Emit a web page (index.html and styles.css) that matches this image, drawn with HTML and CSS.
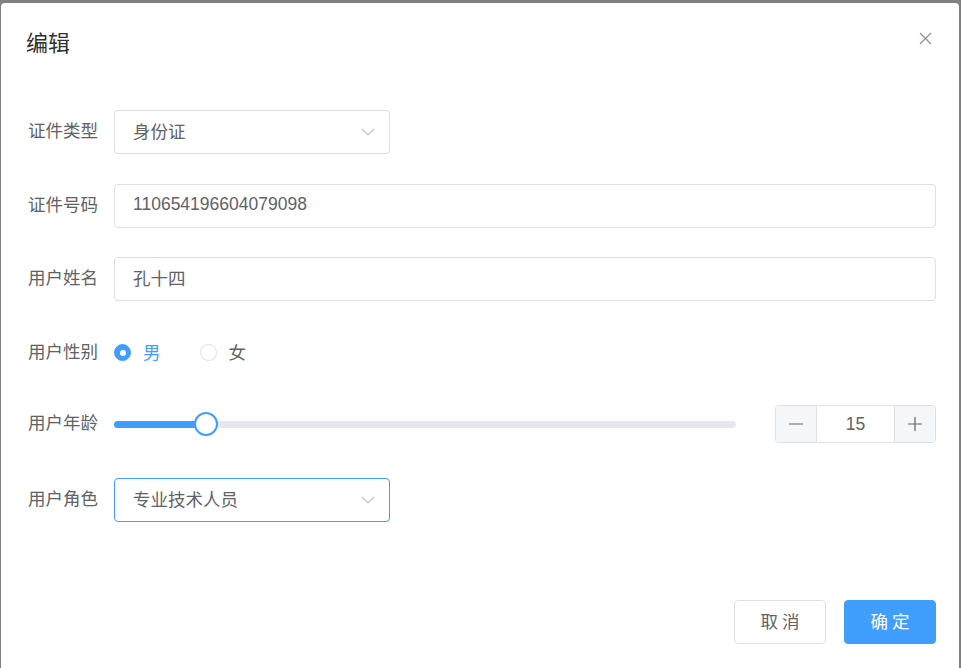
FILE: index.html
```html
<!DOCTYPE html>
<html lang="zh-CN">
<head>
    <meta charset="UTF-8">
    <meta name="viewport" content="width=device-width, initial-scale=1.0">
    <title>编辑</title>
    <link rel="stylesheet" href="styles.css">
</head>
<body>
    <div class="dialog">
        <div class="dialog-header">
            <span class="dialog-title">编辑</span>
            <svg class="dialog-close" width="13" height="13" viewBox="0 0 13 13">
                <path d="M1 1L12 12M12 1L1 12" stroke="#909399" stroke-width="1.3" fill="none"/>
            </svg>
        </div>
        <div class="dialog-body">
            <div class="form-item">
                <label class="form-label">证件类型</label>
                <div class="select">
                    <span>身份证</span>
                    <svg class="arrow" width="14" height="8" viewBox="0 0 14 8">
                        <path d="M1 1L7 7L13 1" stroke="#c0c4cc" stroke-width="1.2" fill="none"/>
                    </svg>
                </div>
            </div>
            <div class="form-item">
                <label class="form-label">证件号码</label>
                <div class="input">110654196604079098</div>
            </div>
            <div class="form-item">
                <label class="form-label">用户姓名</label>
                <div class="input">孔十四</div>
            </div>
            <div class="form-item form-item-radio">
                <label class="form-label">用户性别</label>
                <div class="radio-group">
                    <span class="radio checked"><span class="radio-inner"></span><span class="radio-label">男</span></span>
                    <span class="radio"><span class="radio-inner"></span><span class="radio-label">女</span></span>
                </div>
            </div>
            <div class="form-item form-item-slider">
                <label class="form-label">用户年龄</label>
                <div class="slider">
                    <div class="slider-track">
                        <div class="slider-bar" style="width: 92px"></div>
                        <div class="slider-thumb" style="left: 92px"></div>
                    </div>
                    <div class="input-number">
                        <span class="num-btn minus">
                            <svg width="14" height="14" viewBox="0 0 14 14"><path d="M0 7H14" stroke="#606266" stroke-width="1.2"/></svg>
                        </span>
                        <span class="num-value">15</span>
                        <span class="num-btn plus">
                            <svg width="14" height="14" viewBox="0 0 14 14"><path d="M0 7H14M7 0V14" stroke="#606266" stroke-width="1.2"/></svg>
                        </span>
                    </div>
                </div>
            </div>
            <div class="form-item">
                <label class="form-label">用户角色</label>
                <div class="select focused">
                    <span>专业技术人员</span>
                    <svg class="arrow" width="14" height="8" viewBox="0 0 14 8">
                        <path d="M1 1L7 7L13 1" stroke="#c0c4cc" stroke-width="1.2" fill="none"/>
                    </svg>
                </div>
            </div>
        </div>
        <div class="dialog-footer">
            <button class="btn">取消</button>
            <button class="btn btn-primary">确定</button>
        </div>
    </div>
</body>
</html>
```

FILE: styles.css
```css
body {
    margin: 0;
    background-color: #808080;
    font-family: "Liberation Sans", "Noto Sans CJK SC", sans-serif;
    overflow: hidden;
}
.dialog {
    margin: 3px 0 0 1px;
    width: 958px;
    height: 700px;
    background-color: #fff;
    border-radius: 4px;
}
.dialog-header {
    display: flex;
    justify-content: space-between;
    padding: 26px 27px 0 25px;
}
.dialog-title {
    font-size: 22px;
    line-height: 30px;
    color: #303133;
}
.dialog-close {
    margin-top: 3px;
}
.dialog-body {
    padding: 51px 23px 0 25px;
}
.form-item {
    display: flex;
    align-items: center;
    height: 44px;
    margin-bottom: 29.5px;
}
.form-item:last-child {
    margin-bottom: 0;
}
.form-item-radio {
    margin-bottom: 27.5px;
}
.form-item-slider {
    margin-bottom: 31.5px;
}
.form-label {
    width: 88px;
    flex-shrink: 0;
    box-sizing: border-box;
    padding: 0 16px 5px 0;
    text-align: right;
    font-size: 17.5px;
    color: #606266;
}
.input, .select {
    height: 44px;
    box-sizing: border-box;
    border: 1px solid #dcdfe6;
    border-radius: 4px;
    padding: 0 14px 3px 18px;
    display: flex;
    align-items: center;
    font-size: 17.5px;
    color: #606266;
}
.input {
    flex: 1;
}
.select {
    width: 276px;
    justify-content: space-between;
}
.select .arrow {
    margin-top: 3px;
}
.select.focused {
    border-color: #409eff;
}
.radio-group {
    display: flex;
    align-items: center;
}
.radio {
    display: flex;
    align-items: center;
    margin-right: 39px;
}
.radio-inner {
    width: 17px;
    height: 17px;
    box-sizing: border-box;
    border: 1px solid #dcdfe6;
    border-radius: 50%;
    background-color: #fff;
    display: flex;
    align-items: center;
    justify-content: center;
}
.radio.checked .radio-inner {
    background-color: #409eff;
    border-color: #409eff;
}
.radio.checked .radio-inner::after {
    content: "";
    width: 6px;
    height: 6px;
    border-radius: 50%;
    background-color: #fff;
}
.radio-label {
    margin-left: 12px;
    padding-bottom: 2px;
    font-size: 17.5px;
    color: #606266;
}
.radio.checked .radio-label {
    color: #409eff;
}
.slider {
    flex: 1;
    display: flex;
    align-items: center;
}
.slider-track {
    flex: 1;
    position: relative;
    height: 7px;
    border-radius: 4px;
    background-color: #e4e7ed;
}
.slider-bar {
    height: 7px;
    border-radius: 4px;
    background-color: #409eff;
}
.slider-thumb {
    position: absolute;
    top: 50%;
    width: 24px;
    height: 24px;
    box-sizing: border-box;
    border: 2px solid #409eff;
    border-radius: 50%;
    background-color: #fff;
    transform: translate(-50%, -50%);
}
.input-number {
    margin-left: 39px;
    width: 161px;
    height: 38px;
    box-sizing: border-box;
    border: 1px solid #dcdfe6;
    border-radius: 4px;
    display: flex;
    overflow: hidden;
}
.num-btn {
    width: 40px;
    background-color: #f5f7fa;
    display: flex;
    align-items: center;
    justify-content: center;
}
.num-btn.minus {
    border-right: 1px solid #dcdfe6;
}
.num-btn.plus {
    border-left: 1px solid #dcdfe6;
}
.num-value {
    flex: 1;
    display: flex;
    align-items: center;
    justify-content: center;
    font-size: 17.5px;
    color: #606266;
}
.dialog-footer {
    display: flex;
    justify-content: flex-end;
    gap: 18px;
    padding: 78.5px 23px 0 0;
}
.btn {
    width: 92px;
    height: 44px;
    box-sizing: border-box;
    border: 1px solid #dcdfe6;
    border-radius: 4px;
    background-color: #fff;
    color: #606266;
    font-family: inherit;
    font-size: 17.5px;
    letter-spacing: 4px;
    padding: 0 0 4px 4px;
}
.btn-primary {
    background-color: #409eff;
    border-color: #409eff;
    color: #fff;
}
```
